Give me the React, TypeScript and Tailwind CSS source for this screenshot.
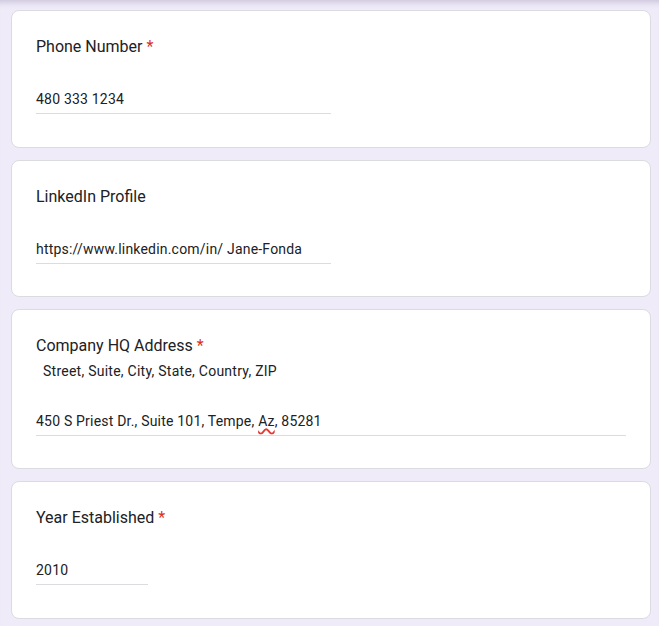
const font = { fontFamily: "Roboto, 'Noto Sans', sans-serif" }

type Props = {
  title: string
  required?: boolean
  help?: string
  width: string
  children: React.ReactNode
}

const Question = ({ title, required, help, width, children }: Props) => (
  <div className="rounded-lg border border-[#dadce0] bg-white px-6 pt-6 pb-[32.5px]">
    <div className="text-[16px] leading-6 text-[#202124]">
      {title}
      {required && <span className="pl-1 text-[#d93025]">*</span>}
    </div>
    {help && (
      <div className="mt-[2.5px] pl-[7px] text-[14px] leading-5 tracking-[0.25px] text-[#202124]">{help}</div>
    )}
    <div className={`mt-[30px] border-b border-[#dadce0] pb-1 text-[14px] leading-5 tracking-[0.2px] text-[#202124] ${width}`}>
      {children}
    </div>
  </div>
)

export default function App() {
  return (
    <div style={font} className="min-h-[626px] bg-[#efebf8] pt-[10px] pl-[11px] pr-[8px] pb-2 shadow-[inset_0_8px_6px_-6px_rgba(60,40,100,0.22)]">
      <div className="flex flex-col gap-3">
        <Question title="Phone Number" required width="w-[295px]">
          480 333 1234
        </Question>
        <Question title="LinkedIn Profile" width="w-[295px]">
          https://www.linkedin.com/in/ Jane-Fonda
        </Question>
        <Question title="Company HQ Address" required help="Street, Suite, City, State, Country, ZIP" width="w-full">
          450 S Priest Dr., Suite 101, Tempe,{" "}
          <span className="underline decoration-wavy decoration-[#e53935] decoration-[length:1.5px] underline-offset-[2px]">Az</span>, 85281
        </Question>
        <Question title="Year Established" required width="w-[112px]">
          2010
        </Question>
      </div>
    </div>
  )
}
